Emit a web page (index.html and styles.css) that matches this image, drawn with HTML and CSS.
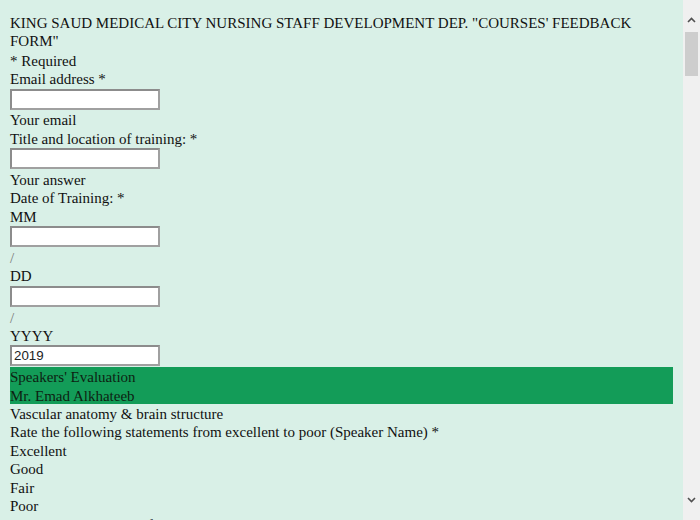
FILE: index.html
```html
<!DOCTYPE html>
<html>
<head>
<meta charset="utf-8">
<title>Courses' Feedback Form</title>
<link rel="stylesheet" href="styles.css">
</head>
<body>
<div class="window">
  <main class="page">
    <div class="line title">KING SAUD MEDICAL CITY NURSING STAFF DEVELOPMENT DEP. "COURSES' FEEDBACK FORM"</div>
    <div class="line">* Required</div>
    <div class="line">Email address *</div>
    <div class="field"><input class="box" type="text"></div>
    <div class="line">Your email</div>
    <div class="line">Title and location of training: *</div>
    <div class="field"><input class="box" type="text"></div>
    <div class="line">Your answer</div>
    <div class="line">Date of Training: *</div>
    <div class="line">MM</div>
    <div class="field"><input class="box" type="text"></div>
    <div class="line slash">/</div>
    <div class="line">DD</div>
    <div class="field"><input class="box" type="text"></div>
    <div class="line slash">/</div>
    <div class="line">YYYY</div>
    <div class="field"><input class="box" type="text" value="2019"></div>
    <div class="band">
      <div class="line">Speakers' Evaluation</div>
      <div class="line">Mr. Emad Alkhateeb</div>
    </div>
    <div class="line">Vascular anatomy &amp; brain structure</div>
    <div class="line">Rate the following statements from excellent to poor (Speaker Name) *</div>
    <div class="line">Excellent</div>
    <div class="line">Good</div>
    <div class="line">Fair</div>
    <div class="line">Poor</div>
    <div class="line">Speaker's knowledge of subject</div>
  </main>
  <div class="scrollbar">
    <div class="arrow up"><svg width="9" height="6" viewBox="0 0 9 6"><path d="M1 5 L4.5 1.5 L8 5" fill="none" stroke="#505050" stroke-width="1.6"/></svg></div>
    <div class="thumb"></div>
    <div class="track"></div>
    <div class="arrow down"><svg width="9" height="6" viewBox="0 0 9 6"><path d="M1 1 L4.5 4.5 L8 1" fill="none" stroke="#505050" stroke-width="1.6"/></svg></div>
  </div>
</div>
</body>
</html>
```

FILE: styles.css
```css
html, body {
  margin: 0;
  padding: 0;
  height: 520px;
  overflow: hidden;
}
.window {
  display: flex;
  height: 520px;
}
.page {
  flex: 1;
  min-width: 0;
  background: #d9f0e7;
  padding: 14px 10px 0 10px;
  overflow: hidden;
  font-family: "Liberation Serif", "Times New Roman", serif;
  font-size: 15px;
  color: #111;
}
.line {
  line-height: 15.4px;
  padding-top: 3px;
}
.title {
  line-height: 18.4px;
  padding-top: 0;
  padding-bottom: 0;
}
.slash {
  color: #777;
}
.field {
  height: 22.8px;
  line-height: 0;
}
.box {
  box-sizing: border-box;
  width: 150px;
  height: 21px;
  margin: 1px 0 0 0;
  padding: 1px 2px;
  border: 2px solid;
  border-color: #8c8c8c #a0a0a0 #a0a0a0 #8c8c8c;
  background: #fff;
  font-family: "Liberation Sans", Arial, sans-serif;
  font-size: 13.33px;
  line-height: normal;
  color: #222;
  vertical-align: top;
}
.band {
  background: #139c58;
  color: #0d1f12;
}
.scrollbar {
  width: 17px;
  flex: none;
  background: #f0f0f0;
  display: flex;
  flex-direction: column;
}
.arrow {
  flex: none;
  display: flex;
  justify-content: center;
  box-sizing: border-box;
}
.up {
  height: 32px;
  align-items: flex-end;
  padding-bottom: 9px;
}
.thumb {
  height: 44px;
  margin: 0 2px;
  background: #cdcdcd;
  flex: none;
}
.track {
  flex: 1;
}
.down {
  height: 30px;
  align-items: flex-start;
  padding-top: 7px;
}
```
